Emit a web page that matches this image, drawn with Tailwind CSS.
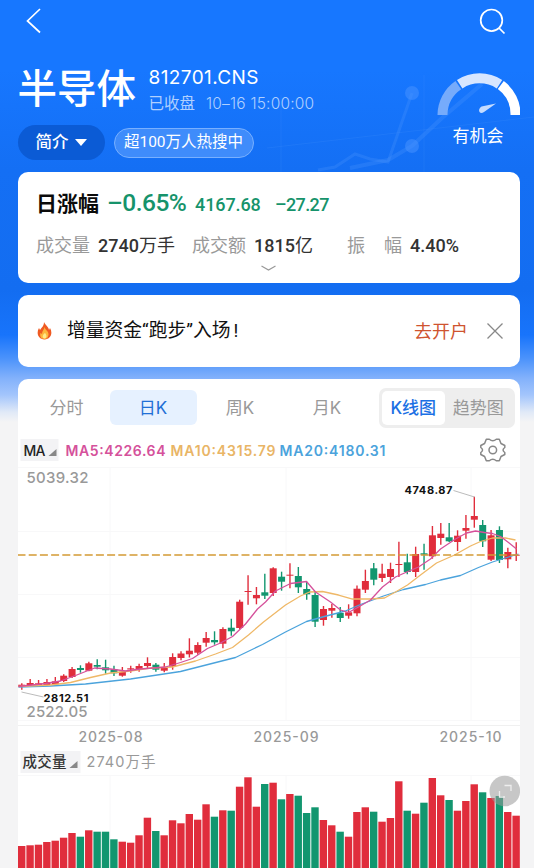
<!DOCTYPE html>
<html lang="zh-CN">
<head>
    <meta charset="UTF-8">
    <meta name="viewport" content="width=device-width, initial-scale=1.0">
    <title>半导体 812701.CNS</title>
    <script src="https://cdn.jsdelivr.net/npm/@tailwindcss/browser@4"></script>
</head>

<body class="bg-[#f4f4f5] font-['Inter','Noto_Sans_CJK_SC',sans-serif]">
<div class="relative w-[534px] h-[868px] overflow-hidden flex flex-col pl-[17.5px] pr-[14.5px] whitespace-nowrap">
    <!-- header backdrop -->
    <div class="absolute inset-x-0 top-0 h-[425px] -z-10 bg-[linear-gradient(180deg,#1777ff_0px,#1777ff_70px,#146ff4_170px,#136df1_290px,#1874fb_335px,#4a92fb_358px,#82b1fb_378px,#a3c5fc_395px,#e0e9f7_412px,#f4f4f5_422px)]">
        <svg class="w-full h-full" viewBox="0 0 534 425" fill="none">
            <g stroke="#5ba0ff" stroke-opacity=".22">
                <path d="M267 148L534 117M281 95V172M424 75V172" stroke-width="1" stroke-opacity=".14"/>
                <path d="M318 170L335 167L355 154L370 159L388 162L412 93" stroke-width="3"/>
                <path d="M350 168L388 160L412 146L442 118L482 84" stroke-width="4"/>
            </g>
            <g fill="#4a94ff" fill-opacity=".5"><circle cx="412" cy="93" r="7"/><circle cx="412" cy="146" r="7"/></g>
        </svg>
    </div>

    <div class="h-[64px] flex justify-between shrink-0">
        <svg class="w-[30px] h-[44px]" viewBox="0 0 30 44" fill="none" stroke="#fff" stroke-width="1.7"><path d="M22 9L9.500 21L22 32.5"/></svg>
        <svg class="w-[44px] h-[44px]" viewBox="0 0 44 44" fill="none" stroke="#fff" stroke-width="1.7"><circle cx="15.500" cy="20.3" r="10.8"/><path d="M23 28L28.500 33.500"/></svg>
    </div>

    <div class="h-[108px] flex justify-between shrink-0 text-white">
        <div>
            <div class="flex h-[61px]">
                <h1 class="w-[131px] text-[39.500px] leading-[50px] font-medium">半导体</h1>
                <div class="pt-px">
                    <div class="text-[19px] leading-[26px] tracking-[0.400px]">812701.CNS</div>
                    <div class="text-[15.500px] leading-[26px] text-[#b0d0ff]">已收盘<span class="ml-[11px] tracking-[0.200px] font-light">10–16 15:00:00</span></div>
                </div>
            </div>
            <div class="flex items-center gap-[9px]">
                <div class="w-[87px] h-[35px] rounded-full bg-[#0b5bd5] flex items-center justify-center gap-1.5 text-[16.500px] font-medium">简介<span class="border-x-[6px] border-x-transparent border-t-[7px] border-t-white"></span></div>
                <div class="w-[140px] h-[30px] rounded-full border border-[#78b0ff] bg-[#3f8cfb] flex items-center justify-center text-[15.500px] font-['Roboto','Noto_Sans_CJK_SC',sans-serif]">超100万人热搜中</div>
            </div>
        </div>
        <div class="w-[84px] pt-[7px] text-center">
            <svg class="w-[84px] h-[48px]" viewBox="0 0 84 48">
                <g fill="none" stroke-width="10">
                    <path d="M6.500 44A36.500 36.500 0 0 1 22.300 14.200" stroke="#76abfb"/>
                    <path d="M23.700 13.200A36.500 36.500 0 0 1 63.500 13.200" stroke="#d7e6ff"/>
                    <path d="M64.800 14.100A36.500 36.500 0 0 1 79.500 44" stroke="#fff"/>
                </g>
                <path d="M60 32.500L45.500 35.500Q42 38 43.500 41Q45 43 48 41Z" fill="#c5dcff"/>
            </svg>
            <div class="text-[17px] leading-[24px] mt-[5px] ml-[1px]">有机会</div>
        </div>
    </div>

    <section class="h-[111px] w-[502px] shrink-0 bg-white rounded-[10px] relative pl-[18.500px] pt-[14px]">
        <div class="flex items-baseline h-[45px] leading-[34px] text-[#16936b] font-['Roboto','Noto_Sans_CJK_SC',sans-serif] font-medium">
            <span class="w-[71px] text-[21px] font-bold text-[#0b0b0b]">日涨幅</span>
            <span class="w-[88px] text-[24.500px] tracking-[-0.500px]">–0.65%</span>
            <span class="w-[80px] text-[18px] tracking-[-0.100px]">4167.68</span>
            <span class="text-[18px] tracking-[-0.600px]">–27.27</span>
        </div>
        <div class="flex leading-[30px] text-[18px] text-[#333] font-['Roboto','Noto_Sans_CJK_SC',sans-serif]">
            <span class="w-[62px] text-[#999] ">成交量</span><span class="w-[94px] font-medium">2740<span class="font-normal">万手</span></span>
            <span class="w-[62px] text-[#999] ">成交额</span><span class="w-[93px] font-medium">1815<span class="font-normal">亿</span></span>
            <span class="w-[37px] text-[#999] ">振</span><span class="w-[26px] text-[#999] ">幅</span><span class="font-medium">4.40%</span>
        </div>
        <svg class="absolute left-[243px] top-[92px] w-[15px] h-[8px]" viewBox="0 0 15 8" fill="none" stroke="#999" stroke-width="1.2"><path d="M.5 2L7.500 6L14.500 2"/></svg>
    </section>

    <section class="mt-[12px] h-[72px] w-[502px] shrink-0 bg-white rounded-[10px] flex items-center pl-[19.500px]">
        <svg class="w-[15px] h-[18px]" viewBox="0 0 15 18">
            <path d="M7 0C8 3 12 5 12 8L13 6C16 11 14 17 7.500 17.500C1 17 -1 11 2 6L3 8C5 5 7 4 7 0Z" fill="#ef5a22"/>
            <path d="M7.500 5C8 8 12 9 11.500 13C11 16 9 17 7.500 17C4 17 2.500 14 3.500 11L5 12C5 9 7 8 7.500 5Z" fill="#fdb63b"/>
            <path d="M8 11C10 13 10 16 7.500 16.500C5 16 5 13 8 11Z" fill="#ffe98a"/>
        </svg>
        <div class="ml-[15px] w-[347px] text-[18.800px] text-[#111] font-['Roboto','Noto_Sans_CJK_SC',sans-serif]">增量资金“跑步”入场<span class="ml-[3px]">!</span></div>
        <div class="w-[73px] text-[18px] text-[#cf5430]">去开户</div>
        <svg class="w-[16px] h-[16px]" viewBox="0 0 16 16" stroke="#888" stroke-width="1.300"><path d="M.5.5L15.500 15.500M15.500.5L.5 15.500"/></svg>
    </section>

    <section class="mt-[12px] h-[490px] w-[502px] shrink-0 bg-white rounded-t-[10px]">
        <div class="flex pt-[9px] h-[58px] text-[17px] text-[#999]">
            <div class="w-[92px] h-[40px] pl-[32px] leading-[40px]">分时</div>
            <div class="w-[87px] mt-[2px] h-[35px] rounded-[6px] bg-[#e6f1ff] text-[#1f6fd6] text-center leading-[36px] font-normal">日K</div>
            <div class="w-[87px] text-center leading-[40px]">周K</div>
            <div class="w-[87px] text-center leading-[40px]">月K</div>
            <div class="ml-[8px] w-[136px] h-[40px] rounded-[7px] bg-[#eee] p-[3px] flex leading-[34px] text-center">
                <div class="w-[64px] bg-white rounded-[5px] text-[#1b70e4] font-medium">K线图</div>
                <div class="w-[67px]">趋势图</div>
            </div>
        </div>
        <!-- moving averages, candles and volume -->
        <svg id="chart" class="w-[502px] h-[431px] block" viewBox="17.5 437 502 431"></svg>
    </section>
</div>

<script>
    const RED = '#e02d3c', GREEN = '#12966f';
    // body top, body bottom, high, low, volume top, g = falling
    const days = [
        [684.7,687,683.3,689.7,846],[683,685,679,686,845.3],[683.3,685.3,680,686,844.7],[682,685,679,686,842],
        [681.3,684.3,677,685,840.7],[675.7,681,674.3,682,837.7],[669,677,667,678,833],[668,670,665.3,672.7,836.7,'g'],
        [663.3,670.7,661.7,671.3,830.3],[665,666.7,659.3,669.3,831.7,'g'],[667.3,670.3,659.7,673.7,831.7,'g'],[669.3,673.3,665.7,676,839.3,'g'],
        [671.7,675.7,667,676.7,841.7],[668.3,669.5,665.7,672.7,842.7],[666,669,663.7,671.7,835.3],[663,666,657.3,668,817.7],
        [664.7,669.7,663,671.7,831,'g'],[667.7,670.7,663,672.3,835.3],[657,666.7,653.3,669.7,820.3],[653.5,658,651.3,660.3,823.3],
        [650.7,654.3,638.3,657.5,814],[645,652.7,642.3,654.7,819.7],[638,642.7,632,646.7,804.3],[640,642.3,631.3,644.7,816.7,'g'],
        [629,643.7,627.3,648.3,810.3],[627.7,631.3,618.7,635.7,810.7,'g'],[601.7,628,599.7,629,786.7],[591,592,575.3,604.7,777.3],
        [595,598.3,587,604.3,806.7],[592.3,595.7,573.7,599,784,'g'],[568.3,593,567.3,596,782.7],[576.7,581.7,571.7,590.7,799.3,'g'],
        [574.7,575.7,563.3,588.3,794],[576,587.3,567,593,795.7,'g'],[589,594.3,581.7,599.7,813,'g'],[595,621.7,591.7,627,807.3,'g'],
        [609,620,606,625.7,820],[608,610.7,604,617.7,825.3],[613,618,607,622,831.7,'g'],[612.3,615.7,604.3,618.7,836.7],
        [588.7,613.3,585.5,616.3,812],[581,589.7,569.7,593,807.3],[568.3,579.7,563,585.3,811.7,'g'],[573.7,578,563.7,582,821.7],
        [569,577,562.7,583,818],[564,565,541.7,577,781.3],[562.3,572,553.7,574.3,810.7,'g'],[554,572,546.7,577,813.7],
        [553.3,554.7,543.7,569.7,802.7,'g'],[535.3,556.3,526,558.7,778],[533.7,538,523,544.7,795.3],[537.3,541.3,523,542,800,'g'],
        [535.7,542,530.3,551,810.7],[528,530.7,515,538.7,801],[516,519.7,496.7,527.7,784.3],[525,541.3,520,547,792.3,'g'],
        [535.3,559.7,530,561,798],[530,560,526.3,563,796,'g'],[552,559.3,547.7,568.3,812],[554.7,555.7,542.3,561,815.7]
    ];
    const line = (pts, color) => `<polyline points="${pts}" fill="none" stroke="${color}" stroke-width="1.3" stroke-linejoin="round"/>`;
    const text = (x, y, w, size, weight, color, s) => `<text x="${x}" y="${y}" textLength="${w}" font-size="${size}" font-weight="${weight}" fill="${color}">${s}</text>`;

    let svg = '<path d="M17 467.500H520M17 531.500H520M17 594.500H520M17 657.500H520M17 720.500H520M109.500 467V720M285.500 467V720M470.500 467V720M17 775.500H520M109.500 775V868M285.500 775V868M470.500 775V868" stroke="#f8f8f9"/>'
        + '<path d="M17 725.500H520" stroke="#f0f0f0"/>';
    days.forEach(([top, bottom, high, low, vol, down], i) => {
        const x = 21.3 + i * 8.38, color = down ? GREEN : RED;
        svg += `<path d="M${x} ${high}V${low}" stroke="${color}" stroke-width="1.4"/>`
            + `<rect x="${x - 3.5}" y="${top}" width="7" height="${bottom - top}" fill="${color}"/>`
            + `<rect x="${x - 3.8}" y="${vol}" width="7.4" height="${868 - vol}" fill="${color}"/>`;
    });
    // MA20, MA10, MA5
    svg += line('18,687 50,686 85,684 130,679 180,671.5 235,657.5 262,644.5 285,632 306,621.5 322,617 345,611 360,604.5 383,596 403,589.500 425,584.500 440,580 460,575.500 478,567.500 492,562 508,557 518,554', '#4ba3dc')
        + line('18,686.5 50,685 70,682.500 90,677.5 110,673 130,671 150,668 172,667 195,661 215,654 232,647.5 248,635 263,622 285,605 300,596 309,592 322,591.5 338,595 352,599 370,599 384,598 395,592 407,585 420,575 436,563 454,555 470,546 480,541.5 492,538 505,538 515,540', '#efb867')
        + line('18,686.5 45,683.5 60,681 75,675.5 94,668 110,669 125,671 140,669 165,667 180,662.5 192,658.5 207,648.5 220,643 232,636.5 245,624 257,609 265,602 275,591 290,583.5 306,581.5 315,592 330,602 340,610 348,612.5 358,607 370,600 382,587 395,577 404,573 418,567 430,559 440,549 455,539 466,533 475,531 484,532.5 492,533.500 500,536.500 508,542.5 516,549', '#d5519b');
    svg += '<path d="M17 555H520" stroke="#d49a35" stroke-width="1.6" stroke-dasharray="8 3.2"/>'
        + '<path d="M453 490.500L474 497M21 692L43 697" stroke="#aaa" stroke-width=".8" fill="none"/>';

    // indicator row
    svg += '<path d="M20 439H58V461H20Z" fill="#f3f3f5"/><path d="M56 449V456H48Z" fill="#888"/>'
        + text(23, 455.5, 22, 14, 500, '#222', 'MA')
        + text(65, 455.5, 100, 14, 600, '#d5519b', 'MA5:4226.64')
        + text(170, 455.5, 105, 14, 600, '#e9b566', 'MA10:4315.79')
        + text(279, 455.5, 106, 14, 600, '#4ba3dc', 'MA20:4180.31')
        + '<g transform="translate(492.300 450)" fill="none" stroke="#888" stroke-width="1.500" stroke-linejoin="round"><circle r="3.800"/><path d="M-6.500-10.800L-3.500-10.800Q0-7.800 3.500-10.800L6.500-10.800L8.200-6.500L12-4.500V-2.500Q8.500 0 12 2.500V4.500L8.200 6.500L6.500 10.800H3.500Q0 7.800-3.500 10.800H-6.500L-8.200 6.500L-12 4.500V2.500Q-8.500 0-12-2.500V-4.500L-8.200-6.500Z"/></g>';

    // scale and dates
    svg += text(26, 482.5, 62, 15, 500, '#999', '5039.32')
        + text(26, 716.8, 61, 15, 500, '#999', '2522.05')
        + text(404, 494, 48, 11, 700, '#111', '4748.87')
        + text(43, 701.8, 45, 11, 700, '#111', '2812.51')
        + text(78, 742, 64, 14, 500, '#999', '2025-08')
        + text(253, 742, 65, 14, 500, '#999', '2025-09')
        + text(439, 742, 62, 14, 500, '#999', '2025-10');

    // volume header and fullscreen button
    svg += '<path d="M20 751H80V773H20Z" fill="#f3f3f5"/><path d="M77 761V768H69Z" fill="#888"/>'
        + text(22, 767, 44, 14.5, 500, '#333', '成交量')
        + text(86, 767, 69, 14.5, 400, '#999', '2740万手')
        + '<circle cx="504.300" cy="791" r="15.300" fill="#999" fill-opacity=".55"/><path d="M504 785.500H510.500V791M499 791V797H504.500" fill="none" stroke="#eee" stroke-width="1.300"/>';
    document.getElementById('chart').innerHTML = svg;
</script>
</body>
</html>
